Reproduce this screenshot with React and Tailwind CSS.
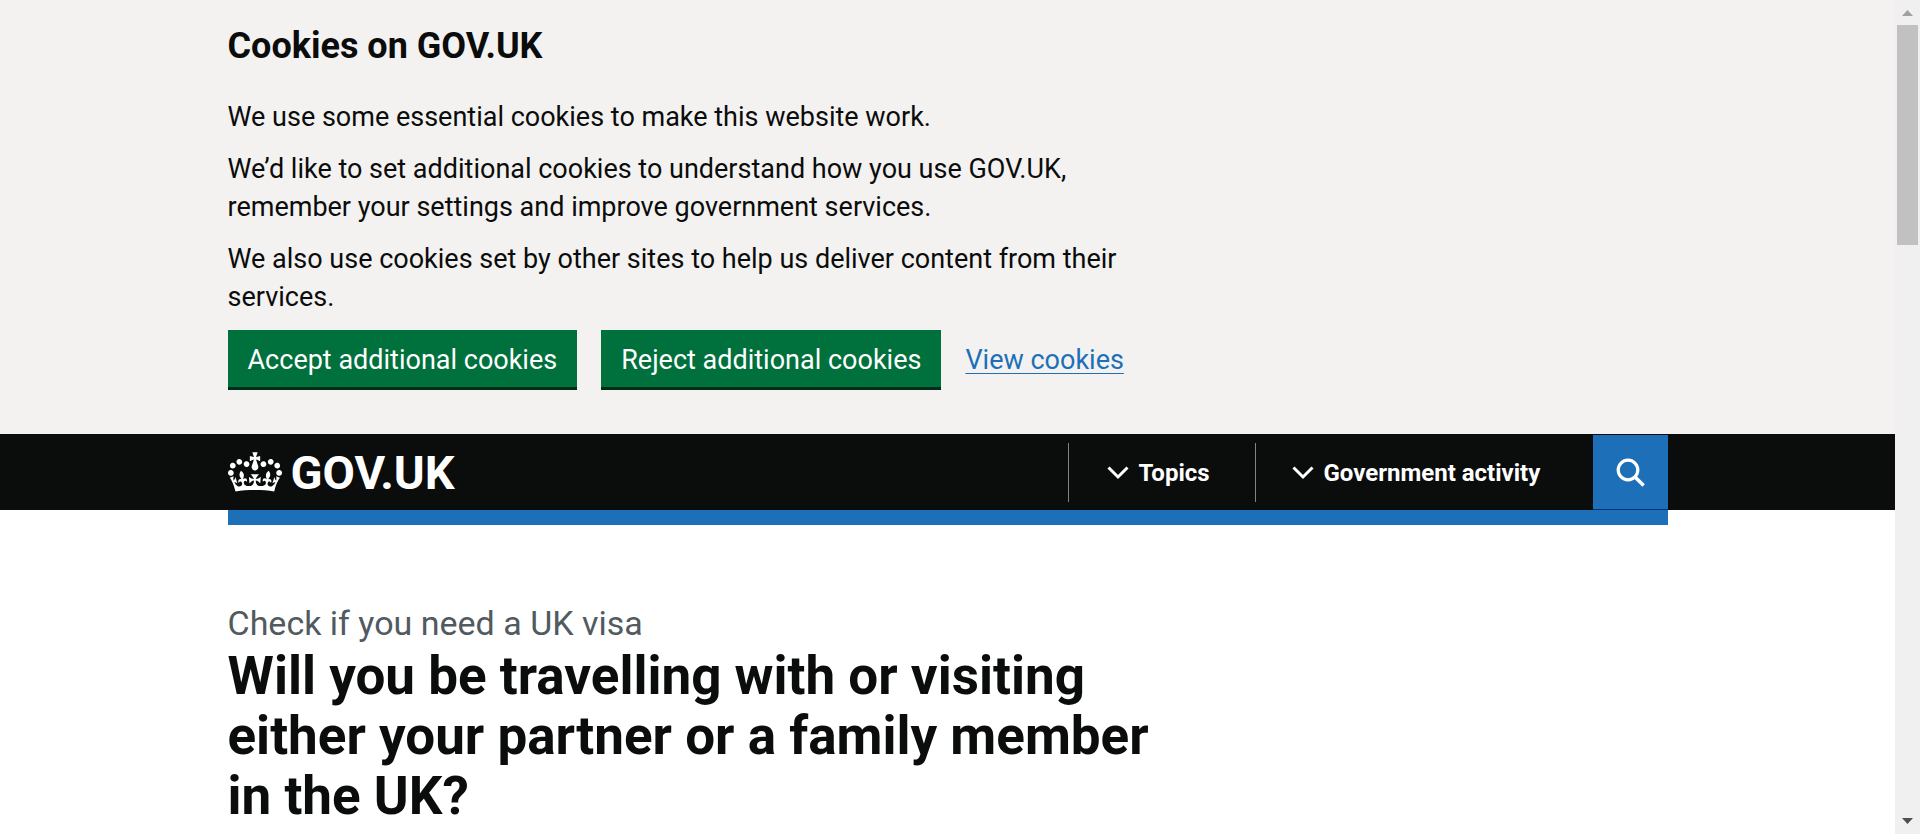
import React from "react";

const CROWN_PATH =
  "M25 30.2c3.5 1.5 7.7-.2 9.1-3.7 1.5-3.6-.2-7.8-3.9-9.2-3.6-1.4-7.6.3-9.1 3.9-1.4 3.5.3 7.5 3.9 9zM9 39.5c3.6 1.5 7.8-.2 9.2-3.7 1.5-3.6-.2-7.8-3.9-9.1-3.6-1.5-7.6.2-9.1 3.8-1.4 3.5.3 7.5 3.8 9zM4.4 57.2c3.5 1.5 7.7-.2 9.1-3.8 1.5-3.6-.2-7.7-3.9-9.1-3.5-1.5-7.6.3-9.1 3.8-1.4 3.5.3 7.6 3.9 9.1zm38.3-21.4c3.5 1.5 7.7-.2 9.1-3.8 1.5-3.6-.2-7.7-3.9-9.1-3.6-1.5-7.6.3-9.1 3.8-1.3 3.6.4 7.7 3.9 9.1zm64.4-5.6c-3.6 1.5-7.8-.2-9.1-3.7-1.5-3.6.2-7.8 3.8-9.2 3.6-1.4 7.7.3 9.2 3.9 1.3 3.5-.4 7.5-3.9 9zm15.9 9.3c-3.6 1.5-7.7-.2-9.1-3.7-1.5-3.6.2-7.8 3.7-9.1 3.6-1.5 7.7.2 9.2 3.8 1.5 3.5-.3 7.5-3.8 9zm4.7 17.7c-3.6 1.5-7.8-.2-9.2-3.8-1.5-3.6.2-7.7 3.9-9.1 3.6-1.5 7.7.3 9.2 3.8 1.3 3.5-.4 7.6-3.9 9.1zM89.3 35.8c-3.6 1.5-7.8-.2-9.2-3.8-1.4-3.6.2-7.7 3.9-9.1 3.6-1.5 7.7.3 9.2 3.8 1.4 3.6-.3 7.7-3.9 9.1zM69.7 17.7l8.9 4.7V9.3l-8.9 2.8c-.2-.3-.5-.6-.9-.9L72.4 0H59.6l3.5 11.2c-.3.3-.6.5-.9.9l-8.8-2.8v13.1l8.8-4.7c.3.3.6.7.9.9l-5 15.4v.1c-.2.8-.4 1.6-.4 2.4 0 4.1 3.1 7.5 7 8.1h.2c.3 0 .7.1 1 .1.4 0 .7 0 1-.1h.2c4-.6 7.1-4.1 7.1-8.1 0-.8-.1-1.7-.4-2.4V34l-5.1-15.4c.4-.2.7-.6 1-.9zM66 92.8c16.9 0 32.8 1.1 47.1 3.2 4-16.9 8.9-26.7 14-33.5l-9.6-3.4c1 4.9 1.1 7.2 0 10.2-1.5-1.4-3-4.3-4.2-8.7L108.6 76c2.8-2 5-3.2 7.5-3.3-4.4 9.4-10 11.9-13.6 11.2-4.3-.8-6.3-4.6-5.6-7.9 1-4.7 5.7-5.9 8-.5 4.3-8.7-3-11.4-7.6-8.8 7.1-7.2 7.9-13.5 2.1-21.1-8 6.1-8.1 12.3-4.5 20.8-4.7-5.4-12.1-2.5-9.5 6.2 3.4-5.2 7.9-2 7.2 3.1-.6 4.3-6.4 7.8-13.5 7.2-10.3-.9-10.9-8-11.2-13.8 2.5-.5 7.1 1.8 11 7.3L80.2 60c-4.1 4.4-8 5.3-12.3 5.4 1.4-4.4 8-11.6 8-11.6H55.5s6.4 7.2 7.9 11.6c-4.2-.1-8-1-12.3-5.4l1.4 16.4c3.9-5.5 8.5-7.7 10.9-7.3-.3 5.8-.9 12.8-11.1 13.8-7.2.6-12.9-2.9-13.5-7.2-.7-5 3.8-8.3 7.1-3.1 2.7-8.7-4.6-11.6-9.4-6.2 3.7-8.5 3.6-14.7-4.6-20.8-5.8 7.6-5 13.9 2.2 21.1-4.7-2.6-11.9.1-7.7 8.8 2.3-5.5 7.1-4.2 8.1.5.7 3.3-1.3 7.1-5.7 7.9-3.5.7-9-1.8-13.5-11.2 2.5.1 4.7 1.3 7.5 3.3l-4.7-15.4c-1.2 4.4-2.7 7.2-4.3 8.7-1.1-3-.9-5.3 0-10.2l-9.5 3.4c5 6.9 9.9 16.7 14 33.5 14.8-2.1 30.8-3.2 47.7-3.2z";

function Container({ children, className = "" }) {
  return <div className={`mx-auto w-full max-w-[1440px] ${className}`}>{children}</div>;
}

function CookieButton({ children }) {
  return (
    <button
      type="button"
      className="h-[60px] border-b-[3px] border-[#002d18] bg-[#00703c] px-5 pt-0.5 text-[27px] leading-[38px] text-white"
    >
      {children}
    </button>
  );
}

function CookieBanner() {
  return (
    <section aria-label="Cookies on GOV.UK" className="bg-[#f3f2f1] pt-6 pb-11">
      <Container>
        <div className="flex max-w-[950px] flex-col">
          <h2 className="mb-[29px] text-4xl leading-[45px] font-bold">Cookies on GOV.UK</h2>
          <div className="flex max-w-[920px] flex-col gap-[14px] text-[27px] leading-[38px]">
            <p>We use some essential cookies to make this website work.</p>
            <p>
              We’d like to set additional cookies to understand how you use GOV.UK, remember your
              settings and improve government services.
            </p>
            <p>We also use cookies set by other sites to help us deliver content from their services.</p>
          </div>
          <div className="mt-[14px] flex items-center gap-6">
            <CookieButton>Accept additional cookies</CookieButton>
            <CookieButton>Reject additional cookies</CookieButton>
            <a
              href="#cookies"
              className="text-[27px] leading-[38px] text-[#1d70b8] underline decoration-1 underline-offset-4"
            >
              View cookies
            </a>
          </div>
        </div>
      </Container>
    </section>
  );
}

function MenuButton({ children, className }) {
  return (
    <button
      type="button"
      className={`flex h-[59px] items-center border-l border-[#808485] pt-0.5 text-2xl font-bold ${className}`}
    >
      <svg aria-hidden="true" width="22" height="14" viewBox="0 0 22 14" fill="none" className="mr-[10px]">
        <path d="M1.500 1.500 11 11l9.500-9.500" stroke="currentColor" strokeWidth="3" />
      </svg>
      {children}
    </button>
  );
}

function Header() {
  return (
    <header className="bg-[#0b0c0c] text-white">
      <Container className="flex h-[76px] items-center justify-between">
        <a href="#home" className="flex items-center gap-[9px] text-[47px] leading-none font-bold">
          <svg aria-hidden="true" width="54" height="40" viewBox="0 0 132 97" fill="currentColor">
            <path d={CROWN_PATH} fillRule="evenodd" />
          </svg>
          GOV.UK
        </a>
        <nav aria-label="Menu" className="flex items-center">
          <MenuButton className="w-[187px] pl-[38px]">Topics</MenuButton>
          <MenuButton className="w-[338px] pl-9">Government activity</MenuButton>
          <button
            type="button"
            aria-label="Search GOV.UK"
            className="flex h-[75px] w-[75px] items-center justify-center border-b border-[#003078] bg-[#1d70b8]"
          >
            <svg aria-hidden="true" width="30" height="30" viewBox="0 0 30 30" fill="none">
              <circle cx="13" cy="13" r="9.800" stroke="currentColor" strokeWidth="3.200" />
              <path d="m19.800 19.800 8.800 8.800" stroke="currentColor" strokeWidth="3.500" />
            </svg>
          </button>
        </nav>
      </Container>
    </header>
  );
}

function Scrollbar() {
  return (
    <div aria-hidden="true" className="sticky top-0 flex h-screen w-[25px] shrink-0 flex-col items-center bg-[#f0f0f0] py-[10px]">
      <svg width="11" height="6" viewBox="0 0 11 6" className="shrink-0">
        <path d="M0 6 5.500 0 11 6z" fill="#a0a0a0" />
      </svg>
      <div className="mt-[9px] h-[220px] w-[21px] bg-[#c1c1c1]" />
      <svg width="11" height="6" viewBox="0 0 11 6" className="mt-auto shrink-0">
        <path d="M0 0h11L5.500 6z" fill="#505050" />
      </svg>
    </div>
  );
}

export default function App() {
  return (
    <div className="flex min-h-screen bg-white font-[Roboto,sans-serif] text-[#0b0c0c]">
      <div className="min-w-0 flex-1">
        <CookieBanner />
        <Header />
        <Container>
          <div className="h-[15px] bg-[#1d70b8]" />
          <main className="max-w-[950px] pt-[76px]">
            <h1>
              <span className="block text-[34px] leading-[45px] text-[#505a5f]">Check if you need a UK visa</span>
              <span className="-mb-1 block text-[53px] leading-[60px] font-bold">
                Will you be travelling with or visiting either your partner or a family member in the UK?
              </span>
            </h1>
          </main>
        </Container>
      </div>
      <Scrollbar />
    </div>
  );
}
